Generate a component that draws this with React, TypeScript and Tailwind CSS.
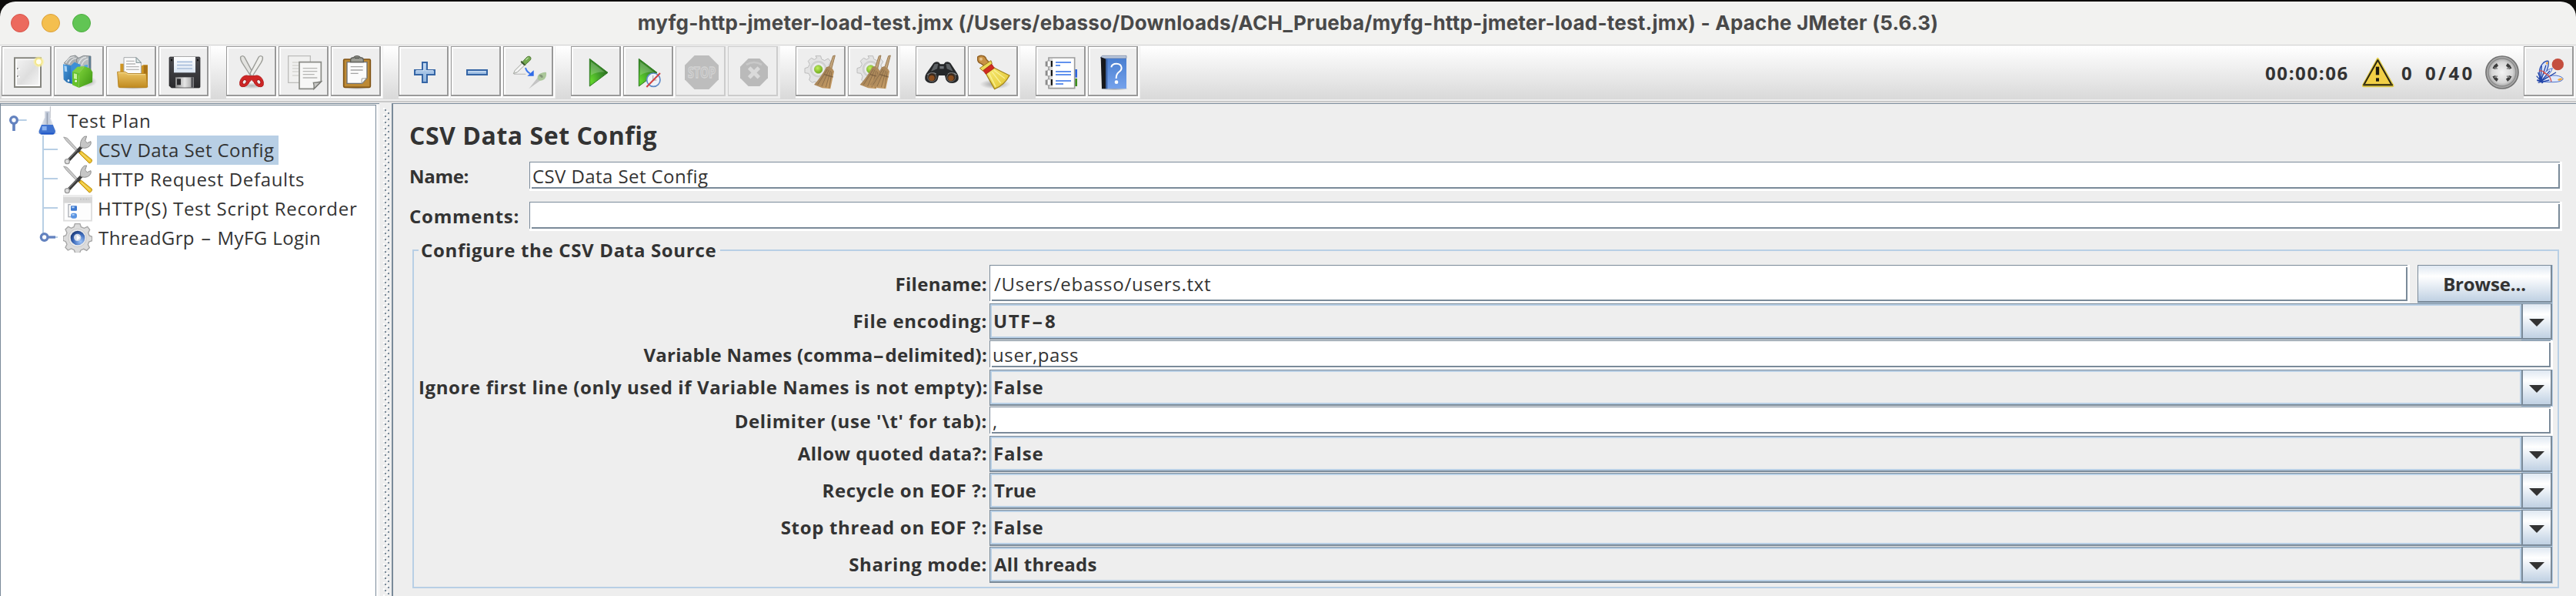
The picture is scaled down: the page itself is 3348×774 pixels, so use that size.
import type { ReactNode } from "react";

/* ---------- toolbar icons, drawn on a 132-unit grid ---------- */

function Icon({ x, children }: { x: number; children: ReactNode }) {
  return (
    <svg className="size-[44px] shrink-0 overflow-visible" viewBox={`${x} 216 132 132`} fill="none">
      {children}
    </svg>
  );
}

function Defs() {
  return (
    <svg className="absolute size-0" aria-hidden="true">
      <defs>
        <linearGradient id="paper" x1="0" y1="0" x2="1" y2="1"><stop offset="0" stopColor="#f2f2f2" /><stop offset=".55" stopColor="#dedede" /><stop offset="1" stopColor="#f4f4f4" /></linearGradient>
        <linearGradient id="blueBinder" x1="0" y1="0" x2="1" y2="1"><stop offset="0" stopColor="#4a9be0" /><stop offset="1" stopColor="#1b5f9e" /></linearGradient>
        <linearGradient id="greenBinder" x1="0" y1="0" x2="1" y2="1"><stop offset="0" stopColor="#7ed33a" /><stop offset="1" stopColor="#3c9412" /></linearGradient>
        <linearGradient id="folder" x1="0" y1="0" x2="0" y2="1"><stop offset="0" stopColor="#ecc566" /><stop offset="1" stopColor="#c08a1f" /></linearGradient>
        <linearGradient id="disk" x1="0" y1="0" x2="0" y2="1"><stop offset="0" stopColor="#4c4c50" /><stop offset="1" stopColor="#2b2b2e" /></linearGradient>
        <linearGradient id="diskLabel" x1="0" y1="0" x2="0" y2="1"><stop offset="0" stopColor="#ffffff" /><stop offset="1" stopColor="#dbe6f3" /></linearGradient>
        <linearGradient id="metal" x1="0" y1="0" x2="1" y2="0"><stop offset="0" stopColor="#8e8e8e" /><stop offset=".5" stopColor="#e6e6e6" /><stop offset="1" stopColor="#9b9b9b" /></linearGradient>
        <linearGradient id="plusBlue" x1="0" y1="0" x2="0" y2="1"><stop offset="0" stopColor="#bcd4ee" /><stop offset="1" stopColor="#8fb3dd" /></linearGradient>
        <radialGradient id="play" cx=".1" cy=".8" r=".9"><stop offset="0" stopColor="#63d62c" /><stop offset=".55" stopColor="#3f9a2a" /><stop offset="1" stopColor="#2d6f20" /></radialGradient>
        <linearGradient id="straw" x1="0" y1="0" x2="1" y2="1"><stop offset="0" stopColor="#8d7250" /><stop offset="1" stopColor="#d2a468" /></linearGradient>
        <linearGradient id="yellowBroom" x1="0" y1="0" x2="1" y2="1"><stop offset="0" stopColor="#f7ec78" /><stop offset="1" stopColor="#e2c32c" /></linearGradient>
        <linearGradient id="helpBlue" x1="0" y1="0" x2="0" y2="1"><stop offset="0" stopColor="#4a7fd0" /><stop offset="1" stopColor="#75a2ec" /></linearGradient>
        <linearGradient id="flask" x1="0" y1="0" x2="1" y2="0"><stop offset="0" stopColor="#f6f7f9" /><stop offset=".5" stopColor="#b9c3d4" /><stop offset="1" stopColor="#eef0f4" /></linearGradient>
        <radialGradient id="gearBlue" cx=".7" cy=".75" r=".8"><stop offset="0" stopColor="#9ec4f8" /><stop offset=".6" stopColor="#3f6dbd" /><stop offset="1" stopColor="#1c3a78" /></radialGradient>
        <radialGradient id="gearGreen" cx=".4" cy=".35" r=".7"><stop offset="0" stopColor="#c2ee5e" /><stop offset="1" stopColor="#6aa816" /></radialGradient>
        <radialGradient id="soft"><stop offset="0" stopColor="#000" stopOpacity=".35" /><stop offset="1" stopColor="#000" stopOpacity="0" /></radialGradient>
        <radialGradient id="silver"><stop offset="0" stopColor="#f4f4f4" /><stop offset=".75" stopColor="#d5d5d5" /><stop offset="1" stopColor="#a9a9a9" /></radialGradient>
      </defs>
    </svg>
  );
}

const NewIcon = () => (
  <Icon x={42}>
    <path d="M57 226h102v113H57z" fill="#fff" stroke="#85857f" strokeWidth="6" />
    <path d="M66 233h85v98H66z" fill="url(#paper)" />
    <path d="M66 264h5v6h-5zM66 294h5v6h-5z" fill="#8f8f8f" />
    <path d="M71 267h6v7h-6zM71 297h6v7h-6z" fill="#fff" />
    <circle cx="151" cy="241" r="21" fill="#fbf3a0" opacity=".55" />
    <circle cx="151" cy="241" r="13" fill="#fffef0" stroke="#f5e78a" strokeWidth="6" />
  </Icon>
);

const TemplatesIcon = () => (
  <Icon x={246}>
    <ellipse cx="335" cy="318" rx="43" ry="22" fill="url(#soft)" />
    <path d="M250 246l24-26 20-4 12 10-20 40z" fill="#a9adb0" stroke="#83888c" strokeWidth="3" />
    <path d="M298 230l28-13 28 2v60l-46 10z" fill="#b6bbbe" stroke="#83888c" strokeWidth="3" />
    <path d="M256 246q14-26 34-24M268 250q12-24 30-22M306 250q8-26 30-28M318 254q8-22 26-24" stroke="#e2e4e5" strokeWidth="4" />
    <path d="M346 219h8v60l-8 4z" fill="#5f7d93" />
    <path d="M246 250l34 6 4 72-24-7-12-11z" fill="url(#blueBinder)" />
    <path d="M276 256l14-14 24 10-6 40-28 36z" fill="#3d8fd6" />
    <path d="M328 254l14-2v20h-14z" fill="#4fa6df" />
    <path d="M250 256l10 2 2 22-10-2z" fill="#a8d3f5" />
    <circle cx="267" cy="314" r="4" fill="#fff" />
    <path d="M282 279l26 6v57l-26-11z" fill="#66c22b" />
    <path d="M308 285l22-26 22 8 9 14-1 39-52 22z" fill="url(#greenBinder)" />
    <path d="M282 279l20-19 28-2-22 28z" fill="#80d13f" />
    <path d="M288 286l12 3v20l-12-3z" fill="#c6f09c" />
    <circle cx="296" cy="316" r="4" fill="#fff" />
  </Icon>
);

const OpenIcon = () => (
  <Icon x={450}>
    <ellipse cx="520" cy="339" rx="62" ry="9" fill="url(#soft)" />
    <path d="M469 248h14l4 8h66l6-3h17v85H469z" fill="#cf9523" />
    <path d="M560 254h15v76l-15-20z" fill="#a8731a" />
    <path d="M483 224h48l19 19v45h-67z" fill="#fafafa" stroke="#a6a9ac" strokeWidth="3" />
    <path d="M531 224v20h19z" fill="#dfe8e8" stroke="#7d8f92" strokeWidth="3" />
    <path d="M492 238h32M492 249h36M492 260h50M492 271h50" stroke="#b6b6b6" strokeWidth="4" />
    <path d="M458 280h30l12 7h70l5 50q0 4-4 4h-104q-5 0-5-4z" fill="url(#folder)" stroke="#b5811d" strokeWidth="3" />
    <path d="M461 283h26l12 7h68" stroke="#f5dc96" strokeWidth="3" />
  </Icon>
);

const SaveIcon = () => (
  <Icon x={654}>
    <path d="M664 222h112q4 0 4 4v112q0 4-4 4H668l-8-8V226q0-4 4-4z" fill="url(#disk)" stroke="#1f1f22" strokeWidth="2" />
    <path d="M678 222h84v61h-84z" fill="url(#diskLabel)" />
    <path d="M690 241h60M690 254h60M690 267h60" stroke="#a9bedb" strokeWidth="5" />
    <path d="M666 230h6v8h-6zM768 230h6v8h-6z" fill="#111" />
    <path d="M684 301h72v40h-72z" fill="url(#metal)" />
    <path d="M690 307h15v24h-15z" fill="#2b2b2e" />
    <path d="M745 301h9v40h-9z" fill="#55555a" />
  </Icon>
);

const CutIcon = () => (
  <Icon x={918}>
    <ellipse cx="982" cy="334" rx="55" ry="12" fill="url(#soft)" opacity=".7" />
    <path d="M938 222q8-8 15 0l34 64-7 14-36-56q-8-12-6-22z" fill="#e3e3e0" stroke="#9b9c97" strokeWidth="4" />
    <path d="M1024 222q-8-8-15 0l-34 64 7 14 36-56q8-12 6-22z" fill="#efefec" stroke="#9b9c97" strokeWidth="4" />
    <path d="M976 296l-16-2q-17 2-24 22-5 22 10 22 18 0 26-18l9-10 9 10q8 18 26 18 15 0 10-22-7-20-24-22l-16 2z" fill="#cf2626" stroke="#b31c1c" strokeWidth="3" />
    <ellipse cx="953" cy="319" rx="7" ry="9" transform="rotate(35 953 319)" fill="#ededed" stroke="#a81616" strokeWidth="3" />
    <ellipse cx="1009" cy="319" rx="7" ry="9" transform="rotate(-35 1009 319)" fill="#ededed" stroke="#a81616" strokeWidth="3" />
  </Icon>
);

const CopyIcon = () => (
  <Icon x={1122}>
    <path d="M1124 218h86v104h-86z" fill="#f0f0ef" stroke="#bdbdbb" strokeWidth="4" />
    <path d="M1140 243h30M1140 255h24M1140 267h24M1140 279h24M1140 294h24" stroke="#d6d6d4" strokeWidth="4" />
    <path d="M1167 242h85v76l-28 28h-57z" fill="#f7f7f6" stroke="#8b8c87" strokeWidth="5" />
    <path d="M1252 318l-28 28q2-12-2-24 14 0 30-4z" fill="#c9c9c6" stroke="#7c7d78" strokeWidth="4" />
    <path d="M1181 266h56M1181 278h56M1181 290h45M1181 303h56" stroke="#b5b5b2" strokeWidth="4" />
  </Icon>
);

const PasteIcon = () => (
  <Icon x={1326}>
    <ellipse cx="1392" cy="341" rx="52" ry="8" fill="url(#soft)" />
    <path d="M1344 231h96q4 0 4 4v101q0 4-4 4h-96q-4 0-4-4V235q0-4 4-4z" fill="#bd8a35" stroke="#7f5314" strokeWidth="5" />
    <path d="M1353 242h78v62l-19 21h-59z" fill="#fbfbfb" stroke="#6f7070" strokeWidth="4" />
    <path d="M1430 304l-19 21q-2-9 0-19 9 1 19-2z" fill="#fff" stroke="#9a9a97" strokeWidth="3" />
    <path d="M1367 260h48M1367 273h48M1367 286h30" stroke="#a5a5a5" strokeWidth="4" />
    <path d="M1367 242v-9q0-6 6-8h6q3-7 13-7t13 7h6q6 2 6 8v9z" fill="#9a9b93" stroke="#5d5e58" strokeWidth="4" />
    <path d="M1383 226h18" stroke="#4e4f4a" strokeWidth="4" />
  </Icon>
);

const PlusIcon = () => (
  <Icon x={90}>
    <path d="M147 243h18v30h30v18h-30v30h-18v-30h-30v-18h30z" fill="url(#plusBlue)" stroke="#3565a5" strokeWidth="6" />
    <path d="M153 248v27h-31M159 275h31" stroke="#d6e5f6" strokeWidth="3" />
  </Icon>
);

const MinusIcon = () => (
  <Icon x={294}>
    <path d="M321 273h78v18h-78z" fill="url(#plusBlue)" stroke="#3565a5" strokeWidth="6" />
    <path d="M326 278h68" stroke="#cfe0f3" strokeWidth="3" />
  </Icon>
);

const ToggleIcon = () => (
  <Icon x={498}>
    <path d="M504 289h46" stroke="#c4c4c4" strokeWidth="4" />
    <path d="M502 287l6-13 30-30 9 9-30 28z" fill="#f4f4f4" stroke="#9fa39c" strokeWidth="3" />
    <path d="M533 236l18 18-8 1-13-13z" fill="#39552a" />
    <path d="M538 240l17-18q8-6 14 1 4 7-4 14l-17 15z" fill="#74a94f" stroke="#587f3f" strokeWidth="3" />
    <path d="M550 233l10-9" stroke="#b7dca0" strokeWidth="4" />
    <path d="M549 264q4 16 18 22" stroke="#3d78ee" strokeWidth="6" />
    <path d="M581 274v22h-25z" fill="#2f6be8" />
    <g opacity=".6">
      <path d="M562 346l34-43 12 10z" fill="#a9a9a9" />
      <path d="M596 306q-2-14 12-20 12-6 22-4 2 18-8 27-12 8-22 3z" fill="#7fae64" />
      <path d="M604 296q8-4 10 6" stroke="#3f5f2c" strokeWidth="8" />
    </g>
  </Icon>
);

const PlayShape = () => (
  <>
    <path d="M799 229l71 54-71 53z" fill="url(#play)" stroke="#2c7a20" strokeWidth="3" />
    <path d="M804 240l54 41q-30-2-54 12z" fill="#fff" opacity=".22" />
  </>
);

const PlayIcon = () => (
  <Icon x={762}>
    <PlayShape />
  </Icon>
);

const PlayNoTimersIcon = () => (
  <Icon x={774}>
    <PlayShape />
    <g transform="translate(-192 0)">
      <circle cx="1048" cy="311" r="26" fill="#eef2f8" stroke="#5f8bc8" strokeWidth="5" />
      <path d="M1046 294v18h14" stroke="#b5b5b5" strokeWidth="4" />
      <path d="M1021 339l53-54" stroke="#cf4343" strokeWidth="6" />
    </g>
  </Icon>
);

const StopIcon = () => (
  <Icon x={1170}>
    <path d="M1208 216h56l38 38v56l-38 38h-56l-38-38v-56z" fill="#bdbdbd" />
    <text x="1236" y="303" textAnchor="middle" textLength="108" lengthAdjust="spacingAndGlyphs" fontFamily="Open Sans, sans-serif" fontWeight="700" fontSize="58" fill="#bdbdbd" stroke="#d3d3d3" strokeWidth="4">STOP</text>
  </Icon>
);

const ShutdownIcon = () => (
  <Icon x={1374}>
    <path d="M1418 228h44l32 32v44l-32 32h-44l-32-32v-44z" fill="#bababa" />
    <path d="M1410 252q30-18 60 0" stroke="#c8c8c8" strokeWidth="8" />
    <path d="M1421 264l38 38M1459 264l-38 38" stroke="#dadada" strokeWidth="15" />
  </Icon>
);

const GearShape = () => (
  <>
    <path d="M180 218h20l3 12 12 6 14-8 10 12-8 14 4 14h8v16l-14 2-6 14 6 12-10 10-14-6-14 6-8 0-6-4-10 4-12-10 4-14-6-12-15-2v-18l13-4 6-12-6-12 12-12 12 6 10-6z" fill="#e3e3e3" stroke="#bcbcbc" strokeWidth="3" />
    <circle cx="191" cy="269" r="31" fill="#d3d3d3" stroke="#c2c2c2" strokeWidth="2" />
    <circle cx="191" cy="269" r="24" fill="#ececec" />
    <circle cx="191" cy="270" r="16" fill="url(#gearGreen)" stroke="#8cb94a" strokeWidth="2" />
  </>
);

const BroomShape = () => (
  <>
    <path d="M248 218l8-2-13 50h-11z" fill="#c3a57c" stroke="#997a52" strokeWidth="3" />
    <path d="M222 262l10-4 14 10 6 10-14 68-32-3-32-13q28-30 48-68z" fill="url(#straw)" />
    <path d="M226 270l-38 60M232 272l-28 64M238 276l-18 64M243 280l-10 64" stroke="#7b6142" strokeWidth="3" opacity=".7" />
    <path d="M214 290l34 10" stroke="#6f5639" strokeWidth="4" opacity=".7" />
  </>
);

const ClearIcon = () => (
  <Icon x={138}>
    <GearShape />
    <BroomShape />
  </Icon>
);

const ClearAllIcon = () => (
  <Icon x={138}>
    <GearShape />
    <g transform="translate(-25 0)"><BroomShape /></g>
    <g transform="translate(12 0)"><BroomShape /></g>
  </Icon>
);

const SearchIcon = () => (
  <Icon x={606}>
    <path d="M640 246q8-8 20-4l6 8h14l6-8q12-4 20 4l26 40q8 14 4 26-8 12-24 12-18 0-24-14l-4-16h-24l-4 16q-6 14-24 14-16 0-24-12-4-12 4-26z" fill="#26282a" />
    <path d="M644 250l14-2-4 20-24 10zM702 250l-14-2 4 20 24 10z" fill="#5d6164" />
    <path d="M664 258h16v10h-16z" fill="#707478" />
    <path d="M616 292q14-14 34-4M730 292q-14-14-34-4" stroke="#8b8e90" strokeWidth="4" />
    <circle cx="634" cy="301" r="17" fill="#3a2a1e" stroke="#6e6e6e" strokeWidth="3" />
    <circle cx="709" cy="301" r="17" fill="#3a2a1e" stroke="#6e6e6e" strokeWidth="3" />
    <circle cx="633" cy="304" r="11" fill="#8a4d1e" />
    <circle cx="708" cy="304" r="11" fill="#8a4d1e" />
  </Icon>
);

const ResetSearchIcon = () => (
  <Icon x={810}>
    <ellipse cx="880" cy="328" rx="60" ry="19" fill="url(#soft)" />
    <path d="M812 222q8-8 22-4 10 4 12 14l14 14-18 14-16-12q-12-4-14-14z" fill="#c79146" stroke="#8f5f22" strokeWidth="4" />
    <circle cx="825" cy="230" r="6" fill="#e7c48d" />
    <path d="M820 266l44-30 4 12-36 28z" fill="#ecd955" stroke="#9c7d1a" strokeWidth="3" />
    <path d="M844 286l32-22q26 14 60 30-20 38-58 53-18-32-34-61z" fill="url(#yellowBroom)" stroke="#a3851c" strokeWidth="4" />
    <path d="M856 286l26 52M868 280l34 44M876 274l42 32" stroke="#fbf5a6" strokeWidth="4" opacity=".8" />
    <path d="M833 275l34-25 10 15-33 24z" fill="#cf2b20" stroke="#a01b12" strokeWidth="2" />
  </Icon>
);

const FunctionIcon = () => (
  <Icon x={1074}>
    <path d="M1188 270h12v32h-12z" fill="#2e66e0" />
    <path d="M1188 306h12v30h-12z" fill="#3c8f1c" />
    <path d="M1089 225h101v119h-101z" fill="#fff" stroke="#9c9c9c" strokeWidth="5" />
    <path d="M1092 228h12v114h-12z" fill="#dcdcdc" />
    {[237, 273, 309].map((y) => (
      <g key={y}>
        <path d={`M1076 ${y + 2}h8v20h-8z`} fill="#8b8b8b" />
        <path d={`M1084 ${y}h12v23h-12z`} fill="#fafafa" stroke="#8b8b8b" strokeWidth="2" />
        <path d={`M1098 ${y}h6v23h-6z`} fill="#161616" />
      </g>
    ))}
    <path d="M1116 243h60M1116 279h60M1116 291h60M1116 315h60" stroke="#2f6fe8" strokeWidth="5" />
    <path d="M1116 255h18M1116 327h30" stroke="#2f6fe8" strokeWidth="5" />
  </Icon>
);

const HelpIcon = () => (
  <Icon x={1278}>
    <ellipse cx="1345" cy="346" rx="58" ry="6" fill="url(#soft)" />
    <path d="M1292 222l6-5h94v10h-100z" fill="#b9c6dc" stroke="#6d7f9d" strokeWidth="2" />
    <path d="M1296 228h96v118h-96z" fill="url(#helpBlue)" />
    <path d="M1292 222l20 8v116h-16z" fill="#16181c" />
    <path d="M1312 230h6v116h-6z" fill="#3b62a5" />
    <path d="M1333 262q2-14 20-14t20 16q0 10-12 18-9 8-9 24" stroke="#fff" strokeWidth="6" />
    <circle cx="1353" cy="320" r="7" fill="#fff" />
  </Icon>
);

const WarningIcon = () => (
  <Icon x={504}>
    <path d="M570 224q4 0 6 5l58 102q2 9-6 9H516q-8 0-6-9l56-102q2-5 4-5z" fill="#e4cf4e" />
    <path d="M571 234l54 96H517z" fill="#f1cf45" stroke="#2b2713" strokeWidth="6" strokeLinejoin="round" />
    <path d="M514 331h116" stroke="#4b4216" strokeWidth="7" />
    <path d="M570 260v32" stroke="#1d1a10" strokeWidth="13" />
    <path d="M564 304h12v13h-12z" fill="#1d1a10" />
  </Icon>
);

const ConnectIcon = () => (
  <Icon x={990}>
    <circle cx="1056" cy="282" r="63" fill="#a9a9a9" stroke="#737373" strokeWidth="5" />
    <circle cx="1056" cy="282" r="54" fill="url(#silver)" stroke="#8c8c8c" strokeWidth="4" />
    <path d="M1024 268q4-11 14-17M1074 251q10 6 14 17M1088 296q-4 11-14 17M1038 313q-10-6-14-17" stroke="#3c3c3c" strokeWidth="12" />
    <path d="M1038 268l-12-4M1074 268l12-4M1074 296l12 6M1038 296l-12 6" stroke="#8a8a8a" strokeWidth="5" />
  </Icon>
);

const PluginsIcon = () => (
  <Icon x={1176}>
    <path d="M1208 316q-16-44 6-68 10-12 22-10 6 22-24 74z" fill="#d8e3f8" stroke="#2b4fb3" strokeWidth="4" />
    <path d="M1206 316q2-20 20-36 12-12 26-14-4 14-14 24l-30 26z" fill="#e8eefb" stroke="#4e73cd" strokeWidth="3" />
    <path d="M1208 318q30-28 58-24 26 4 28 14-6 12-40 12-30 0-46-2z" fill="#dfe8fa" stroke="#4e73cd" strokeWidth="3" />
    <path d="M1206 316l4-60M1207 316l20-62M1208 316l34-40M1208 316l58-34M1190 296l18 20M1196 282l12 34M1196 322l44-10" stroke="#2345a8" strokeWidth="4" />
    <path d="M1200 276q14-2 24 8M1216 284q26 4 32 34" stroke="#d4524c" strokeWidth="4" />
    <path d="M1226 246q6-8 10-4-2 8-6 10zM1272 310q10-8 20-4-4 10-16 8z" fill="#f3a73c" />
    <path d="M1200 302l14 22M1192 312l24 8" stroke="#2345a8" strokeWidth="6" />
    <circle cx="1273" cy="251" r="23" fill="#c44e3e" />
  </Icon>
);

/* ---------- tree icons ---------- */

const FlaskIcon = () => (
  <svg className="size-[38px]" viewBox="126 414 114 114" fill="none">
    <ellipse cx="185" cy="520" rx="42" ry="6" fill="url(#soft)" />
    <path d="M196 414v46" stroke="#b8bcc4" strokeWidth="3" />
    <path d="M175 434h20v24l21 52q2 12-8 14h-46q-12-2-10-14l23-52z" fill="url(#flask)" stroke="#dcdfe6" strokeWidth="2" />
    <path d="M184 440v44" stroke="#8f97a6" strokeWidth="3" />
    <path d="M162 486h44l10 24q0 12-10 14h-44q-12-2-10-14z" fill="#3f72cf" />
    <path d="M164 492h18v16h-18z" fill="#89b0ee" />
    <path d="M160 520h50" stroke="#1e55c8" strokeWidth="5" />
  </svg>
);

const ToolsIcon = () => (
  <svg className="size-[38px]" viewBox="246 528 114 114" fill="none">
    <path d="M248 534l14 4 44 48-6 6-42-44z" fill="#c9c9c9" stroke="#a2a2a2" strokeWidth="3" />
    <path d="M300 582l12-2 4 14-10 2z" fill="#4b4b4b" />
    <path d="M262 630l44-46 20-20" stroke="#3a3a3a" strokeWidth="12" />
    <path d="M266 622l36-38" stroke="#8f8f8f" strokeWidth="3" />
    <circle cx="262" cy="629" r="9" fill="#dedede" stroke="#9a9a9a" strokeWidth="4" />
    <path d="M314 572q-4-24 14-40l10-1-6 18 8 8 14-6q4 16-14 24-12 4-20 0z" fill="#c6c6c6" stroke="#8f8f8f" strokeWidth="3" />
    <path d="M308 596l8-8 42 34q2 12-10 14z" fill="#efc534" stroke="#b98d14" strokeWidth="3" />
    <path d="M318 598l32 28" stroke="#fae689" strokeWidth="3" />
  </svg>
);

const RecorderIcon = () => (
  <svg className="size-[38px]" viewBox="246 756 114 114" fill="none">
    <path d="M249 764h108v96h-108z" fill="#fdfdfd" stroke="#dcdcdc" strokeWidth="5" />
    <path d="M247 759h112v32h-112z" fill="#d7d7d7" />
    <path d="M247 759h112v9h-112z" fill="#ececec" />
    <path d="M312 776h36" stroke="#c2c2c2" strokeWidth="5" strokeDasharray="6 5" />
    <path d="M276 797h-9v48h12" stroke="#a9adb5" strokeWidth="4" />
    <rect x="276" y="802" width="24" height="19" rx="3" fill="#3d78cf" />
    <rect x="276" y="830" width="24" height="21" rx="9" fill="#5c95e2" />
    <path d="M280 805h10v6h-10zM281 834h9v5h-9z" fill="#b4d2f6" />
  </svg>
);

const ThreadGroupIcon = () => (
  <svg className="size-[38px]" viewBox="246 870 114 114" fill="none">
    <path d="M292 872h20l4 12 12 5 13-6 9 12-6 12 4 11 11 4v16l-12 4-4 11 6 12-11 11-12-6-11 5-4 10h-18l-4-11-11-5-13 6-10-11 6-12-5-11-10-4v-16l11-4 4-10-6-13 11-11 12 6 10-5z" fill="#dcdcdc" stroke="#a5a5a5" strokeWidth="4" />
    <circle cx="302" cy="927" r="35" fill="#e9e9e9" stroke="#c9c9c9" strokeWidth="3" />
    <circle cx="303" cy="927" r="28" fill="url(#gearBlue)" />
    <circle cx="302" cy="925" r="14" fill="#d4dbe8" />
    <path d="M299 914l14 12-14 11z" fill="#fff" />
  </svg>
);

/* ---------- shared pieces ---------- */

function ToolButton({ children, disabled = false }: { children: ReactNode; disabled?: boolean }) {
  return (
    <button className="flex size-[68px] shrink-0 items-start bg-[#eeeeee]">
      <span className={`flex size-[67px] items-start border-r-2 border-b-2 ${disabled ? "border-[#eeeeee]" : "border-white"}`}>
        <span
          className={`flex size-[65px] shrink-0 items-start border-t border-r-2 border-b-2 border-l pt-[11px] pl-[11px] ${
            disabled ? "border-[#cccccc]" : "border-[#999999] shadow-[inset_2px_2px_0_#ffffff]"
          }`}
        >
          {children}
        </span>
      </span>
    </button>
  );
}

const Dash = () => <span className="mx-[4px] inline-block scale-x-[1.8]">-</span>;

function Field({ children }: { children?: ReactNode }) {
  return (
    <div className="relative flex min-w-0 flex-1 self-stretch bg-white pr-[3px] pb-[3px]">
      <div className="flex flex-1 items-center border-t border-r-2 border-b-2 border-l border-[#7a8a99] pl-[3px]">
        <div className="h-[32px] pt-[3px] leading-[29px]">{children}</div>
      </div>
      <span className="absolute bottom-[3px] left-px h-[2px] w-[2px] bg-white" />
      <span className="absolute top-px right-[3px] h-[2px] w-[2px] bg-white" />
    </div>
  );
}

function Combo({ children }: { children: ReactNode }) {
  return (
    <div className="flex h-[48px] min-w-0 flex-1">
      <div className="mb-px flex h-[47px] flex-1 border-t border-b-2 border-l border-[#7a8a99]">
        <div className="flex flex-1 items-start border-2 border-[#b8cfe5] pt-px pl-[2px]">{children}</div>
      </div>
      <div className="h-[48px] w-[41px] bg-[#b8cfe5] pr-px pb-px">
        <div className="flex h-[47px] items-start justify-center border-t border-r-2 border-b-2 border-l-2 border-[#7a8a99] bg-linear-to-b from-[#dfe8f2] via-white via-30% to-[#c0d1e3] pt-[19px]">
          <svg className="h-[10px] w-[20px]" viewBox="0 0 20 10">
            <path d="M0 0h20L10 10z" fill="#333333" />
          </svg>
        </div>
      </div>
    </div>
  );
}

const labelCell = "pr-[3px] text-right font-bold";

function ComboRow({ label, tracking, children }: { label: string; tracking: string; children: ReactNode }) {
  return (
    <>
      <div className={`${labelCell} pt-[4px] ${tracking}`}>{label}</div>
      <Combo>{children}</Combo>
    </>
  );
}

/* ---------- tree ---------- */

function Tree() {
  return (
    <aside className="flex w-[493px] shrink-0 border-t border-[#7a8a99]">
      <div className="flex-1 border-l border-[#7a8a99] pt-px">
        <div className="flex h-full">
          <div className="w-[488px] border-t border-r border-[#7a8a99] bg-white pt-px leading-[38px] text-[#333333]">
            <div className="flex h-[38px]">
              <svg className="h-[38px] w-[41px]" viewBox="3 414 123 114" fill="none">
                <path d="M72 468h32" stroke="#b8cfe5" strokeWidth="6" />
                <path d="M54 480v30" stroke="#6382bf" strokeWidth="11" />
                <circle cx="54" cy="468" r="13" fill="#fff" stroke="#6382bf" strokeWidth="10" />
              </svg>
              <FlaskIcon />
              <span className="pl-[8px] tracking-[0.78px]">Test Plan</span>
            </div>
            <TreeRow icon={<ToolsIcon />} selected>
              <span className="tracking-[0.42px]">CSV Data Set Config</span>
            </TreeRow>
            <TreeRow icon={<ToolsIcon />}>
              <span className="-ml-px tracking-[0.66px]">HTTP Request Defaults</span>
            </TreeRow>
            <TreeRow icon={<RecorderIcon />}>
              <span className="-ml-px tracking-[0.73px]">HTTP(S) Test Script Recorder</span>
            </TreeRow>
            <TreeRow icon={<ThreadGroupIcon />} last>
              <span className="tracking-[0.42px]">
                ThreadGrp <Dash /> MyFG Login
              </span>
            </TreeRow>
          </div>
          <div className="w-[2px] bg-white" />
          <div className="w-px bg-[#eeeeee]" />
          <div className="w-px bg-white" />
        </div>
      </div>
    </aside>
  );
}

function TreeRow({ icon, children, selected = false, last = false }: { icon: ReactNode; children: ReactNode; selected?: boolean; last?: boolean }) {
  return (
    <div className="flex h-[38px]">
      <svg className="h-[38px] w-[81px]" viewBox="3 0 243 114" fill="none">
        <path d={last ? "M168 0v42" : "M168 0v114"} stroke="#b8cfe5" strokeWidth="6" />
        <path d="M168 54h57" stroke="#b8cfe5" strokeWidth="6" />
        {last && (
          <>
            <path d="M184 54h32" stroke="#6382bf" strokeWidth="10" />
            <circle cx="173" cy="54" r="13" fill="#fff" stroke="#6382bf" strokeWidth="10" />
          </>
        )}
      </svg>
      {icon}
      <div className={`ml-[6px] h-[38px] pl-[2px] ${selected ? "w-[236px] bg-[#b8cfe5]" : ""}`}>{children}</div>
    </div>
  );
}

/* ---------- window ---------- */

export default function App() {
  return (
    <div className="flex h-[774px] w-[3348px] flex-col overflow-hidden bg-[#0e0d0b] pt-[2px] font-['Open_Sans','Liberation_Sans',sans-serif] text-[24px] leading-[38px] whitespace-nowrap text-[#333333]">
      <Defs />

      <header className="grid h-[56px] shrink-0 grid-cols-[400px_1fr_400px] items-center rounded-t-[20px] bg-[#f2f2f0]">
        <div className="flex gap-[16px] pl-[14px]">
          <span className="size-[24px] rounded-full border border-[#d9564b] bg-[#ec6a5e]" />
          <span className="size-[24px] rounded-full border border-[#dca03b] bg-[#f4bf4f]" />
          <span className="size-[24px] rounded-full border border-[#4fae43] bg-[#61c554]" />
        </div>
        <h1 className="text-center font-['Inter','Liberation_Sans',sans-serif] text-[26px] leading-[38px] font-bold tracking-[0.23px] text-[#494949]">
          myfg-http-jmeter-load-test.jmx (/Users/ebasso/Downloads/ACH_Prueba/myfg-http-jmeter-load-test.jmx) - Apache JMeter (5.6.3)
        </h1>
      </header>

      <div className="flex h-[76px] shrink-0 flex-col bg-[#eeeeee]">
        <div className="h-px bg-[#d3d3d3]" />
        <div className="h-px bg-[#f6f6f6]" />
        <nav className="flex h-[69px] bg-linear-to-b from-white to-[#d9d9d9] pl-[2px]">
          <ToolButton><NewIcon /></ToolButton>
          <ToolButton><TemplatesIcon /></ToolButton>
          <ToolButton><OpenIcon /></ToolButton>
          <ToolButton><SaveIcon /></ToolButton>
          <div className="w-[20px]" />
          <ToolButton><CutIcon /></ToolButton>
          <ToolButton><CopyIcon /></ToolButton>
          <ToolButton><PasteIcon /></ToolButton>
          <div className="w-[20px]" />
          <ToolButton><PlusIcon /></ToolButton>
          <ToolButton><MinusIcon /></ToolButton>
          <ToolButton><ToggleIcon /></ToolButton>
          <div className="w-[20px]" />
          <ToolButton><PlayIcon /></ToolButton>
          <ToolButton><PlayNoTimersIcon /></ToolButton>
          <ToolButton disabled><StopIcon /></ToolButton>
          <ToolButton disabled><ShutdownIcon /></ToolButton>
          <div className="w-[20px]" />
          <ToolButton><ClearIcon /></ToolButton>
          <ToolButton><ClearAllIcon /></ToolButton>
          <div className="w-[20px]" />
          <ToolButton><SearchIcon /></ToolButton>
          <ToolButton><ResetSearchIcon /></ToolButton>
          <div className="w-[20px]" />
          <ToolButton><FunctionIcon /></ToolButton>
          <ToolButton><HelpIcon /></ToolButton>

          <div className="ml-auto flex pt-[12px] font-bold">
            <span className="w-[124px] pt-[4px] leading-[38px] tracking-[1.6px]">00:00:06</span>
            <WarningIcon />
            <span className="w-[31px] pt-[4px] pl-[9px] leading-[38px]">0</span>
            <span className="w-[87px] pt-[4px] pl-[9px] leading-[38px] tracking-[3.4px]">0/40</span>
            <ConnectIcon />
          </div>
          <div className="ml-[6px]">
            <ToolButton><PluginsIcon /></ToolButton>
          </div>
        </nav>
        <div className="h-[2px]" />
        <div className="h-[2px] bg-[#c9c9c9]" />
      </div>

      <div className="flex min-h-0 flex-1 bg-[#eeeeee]">
        <Tree />

        <div className="flex w-[16px] shrink-0 pt-[6px] pl-[5px]">
          <svg className="h-[634px] w-[8px]">
            <defs>
              <pattern id="grip" width="8" height="8" patternUnits="userSpaceOnUse">
                <path d="M0 0h2v2H0zM4 4h2v2H4z" fill="#ffffff" />
                <path d="M2 2h2v2H2zM6 6h2v2H6z" fill="#7a8a99" />
              </pattern>
            </defs>
            <rect width="8" height="634" fill="url(#grip)" />
          </svg>
        </div>

        <main className="flex flex-1 flex-col border-t border-l-2 border-[#7a8a99] pt-[19px] pr-[18px] pl-[21px]">
          <h2 className="text-[32px] leading-[44px] font-bold tracking-[0.54px]">CSV Data Set Config</h2>

          <div className="mt-[12px] flex h-[38px]">
            <div className="w-[156px] font-bold tracking-[-0.31px]">Name:</div>
            <Field>
              <span className="tracking-[0.42px]">CSV Data Set Config</span>
            </Field>
          </div>
          <div className="mt-[14px] flex h-[38px]">
            <div className="w-[156px] font-bold tracking-[0.74px]">Comments:</div>
            <Field />
          </div>

          <fieldset className="mt-[6px] mr-[4px] ml-[4px] border-2 border-[#b8cfe5] px-[6px] pb-[4px]">
            <legend className="h-[38px] w-[392px] pl-[3px] font-bold tracking-[0.67px]">Configure the CSV Data Source</legend>

            <div className="grid grid-cols-[742px_1fr]">
              <div className={`${labelCell} h-[50px] pt-[6px] tracking-[0.3px]`}>Filename:</div>
              <div className="flex">
                <Field>
                  <span className="pl-[2px] tracking-[0.72px]">/Users/ebasso/users.txt</span>
                </Field>
                <div className="ml-[10px] w-[176px] bg-[#b8cfe5] pr-px pb-px">
                  <button className="block h-[49px] w-full border-t border-r-2 border-b-2 border-l border-[#7a8a99] bg-linear-to-b from-[#dfe8f2] via-white via-30% to-[#c0d1e3] pt-px text-center font-bold tracking-[-0.15px]">
                    Browse...
                  </button>
                </div>
              </div>

              <ComboRow label="File encoding:" tracking="tracking-[0.75px]">
                <span className="font-bold tracking-[1.5px]">
                  UTF<Dash />8
                </span>
              </ComboRow>

              <div className={`${labelCell} h-[38px] tracking-[0.26px]`}>
                Variable Names (comma<Dash />delimited):
              </div>
              <div className="flex">
                <Field>
                  <span className="tracking-[0.61px]">user,pass</span>
                </Field>
              </div>

              <ComboRow label="Ignore first line (only used if Variable Names is not empty):" tracking="tracking-[0.61px]">
                <span className="font-bold tracking-[0.89px]">False</span>
              </ComboRow>

              <div className={`${labelCell} h-[38px] tracking-[0.59px]`}>Delimiter (use '\t' for tab):</div>
              <div className="flex">
                <Field>
                  <span>,</span>
                </Field>
              </div>

              <ComboRow label="Allow quoted data?:" tracking="tracking-[0.46px]">
                <span className="font-bold tracking-[0.89px]">False</span>
              </ComboRow>
              <ComboRow label="Recycle on EOF ?:" tracking="tracking-[0.67px]">
                <span className="pl-px font-bold">True</span>
              </ComboRow>
              <ComboRow label="Stop thread on EOF ?:" tracking="tracking-[0.67px]">
                <span className="font-bold tracking-[0.89px]">False</span>
              </ComboRow>
              <ComboRow label="Sharing mode:" tracking="tracking-[0.6px]">
                <span className="pl-px font-bold tracking-[0.31px]">All threads</span>
              </ComboRow>
            </div>
          </fieldset>
        </main>
      </div>
    </div>
  );
}
